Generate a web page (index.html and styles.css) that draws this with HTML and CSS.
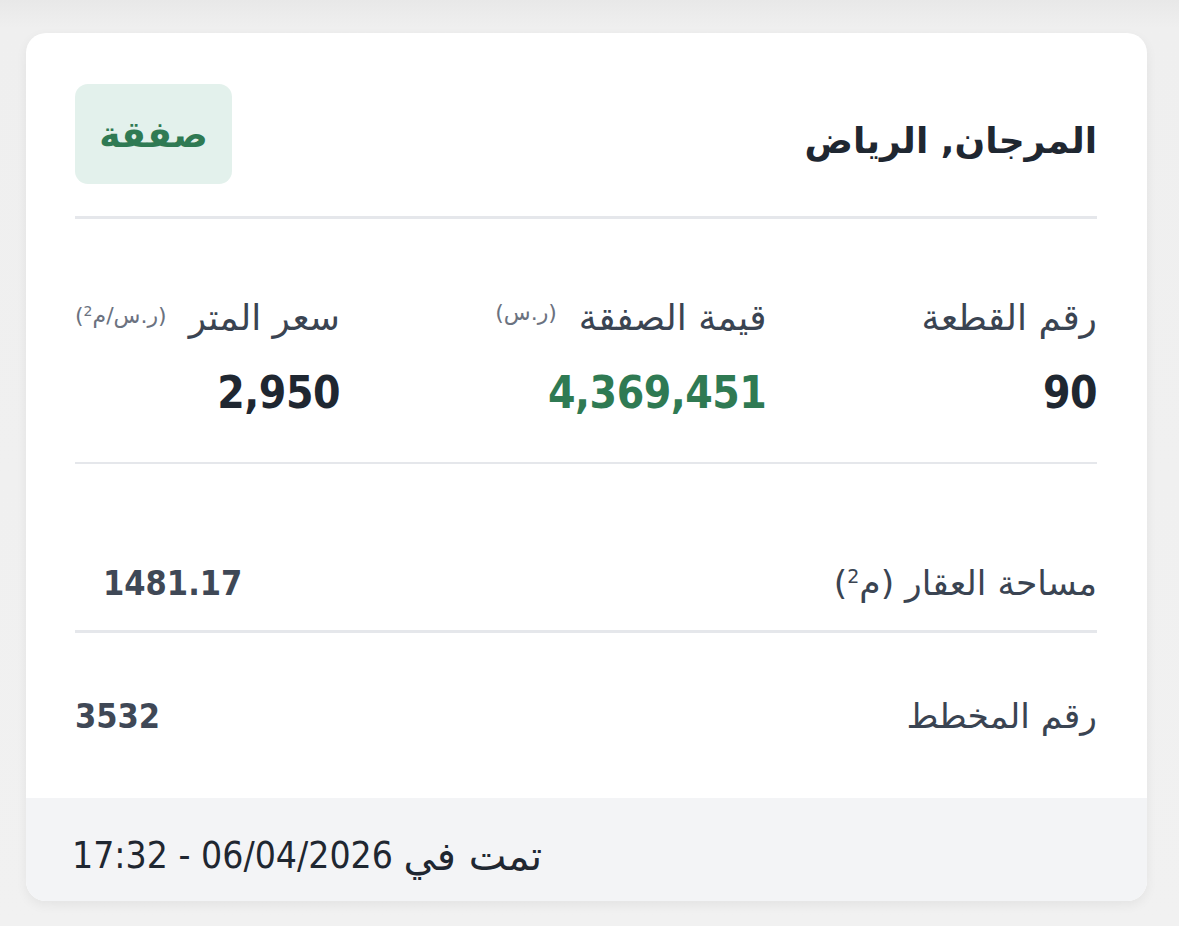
FILE: index.html
```html
<!DOCTYPE html>
<html lang="ar" dir="rtl">
<head>
<meta charset="utf-8">
<link rel="stylesheet" href="styles.css">
</head>
<body>
<div class="card">
  <div class="body">
    <div class="header">
      <h1 class="title">المرجان, الرياض</h1>
      <span class="badge">صفقة</span>
    </div>
    <div class="stats">
      <div class="stat">
        <div class="label">رقم القطعة</div>
        <div class="value">90</div>
      </div>
      <div class="stat">
        <div class="label">قيمة الصفقة<span class="unit">(ر.س)</span></div>
        <div class="value green">4,369,451</div>
      </div>
      <div class="stat">
        <div class="label">سعر المتر<span class="unit">(ر.س/م<sup>2</sup>)</span></div>
        <div class="value">2,950</div>
      </div>
    </div>
    <div class="row first">
      <div class="rlabel">مساحة العقار (م<sup>2</sup>)</div>
      <div class="rvalue indent">1481.17</div>
    </div>
    <div class="row second">
      <div class="rlabel">رقم المخطط</div>
      <div class="rvalue">3532</div>
    </div>
  </div>
  <div class="footer"><span class="done">تمت في</span> 06/04/2026 - 17:32</div>
</div>
</body>
</html>
```
FILE: styles.css
```css
html, body {
  margin: 0;
  padding: 0;
}
body {
  background: linear-gradient(#e8e8e8 0, #efefef 28px, #f1f1f1 100%);
  font-family: "DejaVu Sans Condensed", "DejaVu Sans", sans-serif;
  height: 926px;
  overflow: hidden;
}
.card {
  margin: 33px 32px 0 26px;
  background: #fff;
  border-radius: 20px;
  overflow: hidden;
  box-shadow: 0 4px 12px rgba(0,0,0,0.06);
  height: 868px;
  display: flex;
  flex-direction: column;
}
.body {
  flex: 1;
  padding: 0 50px 0 49px;
}
.header {
  display: flex;
  justify-content: space-between;
  align-items: center;
  padding-top: 51px;
  padding-bottom: 32px;
  border-bottom: 3px solid #e5e7eb;
}
.title {
  margin: 0;
  font-family: "DejaVu Sans", sans-serif;
  font-size: 36px;
  font-weight: bold;
  color: #1f2731;
  line-height: 50px;
  padding-top: 14px;
}
.badge {
  width: 157px;
  height: 100px;
  border-radius: 13px;
  background: #e3f1ec;
  color: #2f7a53;
  font-family: "DejaVu Sans", sans-serif;
  font-size: 36px;
  font-weight: bold;
  display: flex;
  align-items: center;
  justify-content: center;
}
.stats {
  display: flex;
  justify-content: space-between;
  padding-top: 79px;
  padding-bottom: 45px;
  border-bottom: 2px solid #e5e7eb;
}
.label {
  font-family: "DejaVu Sans", sans-serif;
  font-size: 36px;
  color: #3a4452;
  line-height: 40px;
  white-space: nowrap;
  display: flex;
  align-items: center;
}
.unit {
  font-size: 22px;
  color: #6b7280;
  margin-right: 22px;
  line-height: 22px;
  position: relative;
  top: -5px;
}
.unit sup {
  font-size: 14px;
  vertical-align: 7px;
}
.value {
  margin-top: 31px;
  font-size: 44px;
  letter-spacing: -0.5px;
  font-weight: bold;
  color: #1f2731;
  line-height: 48px;
}
.value.green {
  color: #2f7a53;
}
.row {
  display: flex;
  justify-content: space-between;
  align-items: center;
}
.row.first {
  padding-top: 99px;
  padding-bottom: 27px;
  border-bottom: 3px solid #e5e7eb;
}
.row.second {
  padding-top: 63px;
}
.rlabel {
  font-family: "DejaVu Sans", sans-serif;
  font-size: 34.5px;
  color: #3a4452;
  line-height: 40px;
}
.rlabel sup {
  font-size: 19px;
  line-height: 0;
}
.rvalue {
  font-size: 34px;
  font-weight: bold;
  color: #3f4856;
  line-height: 40px;
}
.rvalue.indent {
  margin-left: 28px;
}
.footer {
  background: #f3f4f6;
  height: 103px;
  box-sizing: border-box;
  padding: 12px 46px 0;
  display: flex;
  align-items: center;
  justify-content: flex-end;
  font-size: 37px;
  color: #1f2731;
  white-space: pre;
}
.done {
  font-family: "DejaVu Sans", sans-serif;
  font-size: 40px;
}
```
